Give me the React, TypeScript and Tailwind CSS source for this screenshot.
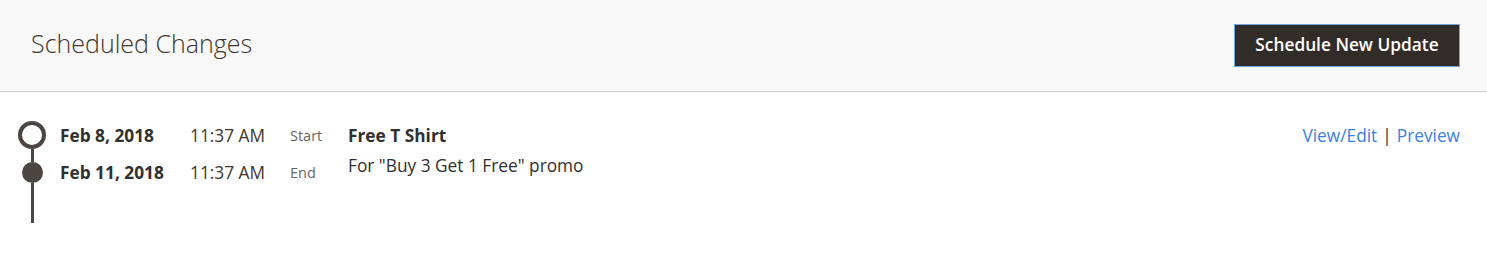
import React from "react";

export default function App() {
  return (
    <div className="w-[1487px] h-[279px] bg-white" style={{ fontFamily: '"Open Sans", sans-serif' }}>
      <div className="h-[92px] bg-[#f8f8f8] border-b border-[#cccccc] flex items-center justify-between pl-[31px] pr-[27px]">
        <h2 className="text-[25px] font-light text-[#41362f] leading-none -mt-[4px]">Scheduled Changes</h2>
        <button className="h-[43px] w-[226px] bg-[#322c29] border border-[#6fa6e6] text-white text-[17.3px] font-semibold -mt-[1px]">
          Schedule New Update
        </button>
      </div>
      <div className="flex pt-[29px] pl-[18px] pr-[27px]">
        <div className="flex flex-col items-center w-[28px]">
          <div className="w-[28px] h-[28px] rounded-full border-[4px] border-[#4d4541]" />
          <div className="w-[3px] h-[13px] bg-[#4d4541]" />
          <div className="w-[21px] h-[21px] rounded-full bg-[#4d4541]" />
          <div className="w-[3px] h-[40px] bg-[#4d4541]" />
        </div>
        <div className="flex flex-col ml-[14px] -mt-[4px]">
          <div className="flex items-center h-[37px]">
            <span className="w-[130px] text-[17.3px] font-bold text-[#303030]">Feb 8, 2018</span>
            <span className="w-[100px] text-[17.3px] text-[#41362f]">11:37 AM</span>
            <span className="w-[58px] text-[14.5px] text-[#666666]">Start</span>
          </div>
          <div className="flex items-center h-[37px]">
            <span className="w-[130px] text-[17.3px] font-bold text-[#303030]">Feb 11, 2018</span>
            <span className="w-[100px] text-[17.3px] text-[#41362f]">11:37 AM</span>
            <span className="w-[58px] text-[14.5px] text-[#666666]">End</span>
          </div>
        </div>
        <div className="flex flex-col -mt-[4px]">
          <div className="h-[37px] flex items-center text-[17.3px] font-bold text-[#303030]">Free T Shirt</div>
          <div className="h-[24px] flex items-center text-[17.3px] text-[#303030]">For "Buy 3 Get 1 Free" promo</div>
        </div>
        <div className="ml-auto flex h-[37px] items-center -mt-[4px] text-[17.3px] text-[#3b7fe0]">
          <a href="#">View/Edit</a>
          <span className="mx-[5px] text-[#303030]">|</span>
          <a href="#">Preview</a>
        </div>
      </div>
    </div>
  );
}
